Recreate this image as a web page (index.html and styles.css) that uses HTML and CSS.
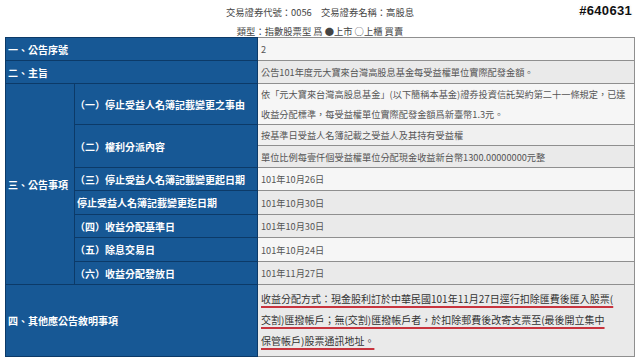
FILE: index.html
```html
<!DOCTYPE html>
<html lang="zh-Hant">
<head>
<meta charset="utf-8">
<link rel="stylesheet" href="styles.css">
</head>
<body>
<div class="tag">#640631</div>
<div class="head">
  <div class="l1">交易證券代號：0056　交易證券名稱：高股息</div>
  <div class="l2">類型：指數股票型 爲 ●上市 ○上櫃 買賣</div>
</div>
<table class="info">
  <colgroup><col class="c1"><col class="c2"><col class="c3"></colgroup>
  <tr class="h23">
    <th colspan="2" class="lab">一、公告序號</th>
    <td class="val light">2</td>
  </tr>
  <tr class="h23">
    <th colspan="2" class="lab">二、主旨</th>
    <td class="val gray">公告101年度元大寶來台灣高股息基金每受益權單位實際配發金額。</td>
  </tr>
  <tr class="h41">
    <th rowspan="8" class="lab">三、公告事項</th>
    <th class="lab sub">（一）停止受益人名簿記載變更之事由</th>
    <td class="val light two">依「元大寶來台灣高股息基金」(以下簡稱本基金)證券投資信託契約第二十一條規定，已達<br>收益分配標準，每受益權單位實際配發金額爲新臺幣1.3元。</td>
  </tr>
  <tr class="h21">
    <th rowspan="2" class="lab sub">（二）權利分派內容</th>
    <td class="val mid">按基準日受益人名簿記載之受益人及其持有受益權</td>
  </tr>
  <tr class="h22">
    <td class="val gray">單位比例每壹仟個受益權單位分配現金收益新台幣1300.00000000元整</td>
  </tr>
  <tr class="h23">
    <th class="lab sub">（三）停止受益人名簿記載變更起日期</th>
    <td class="val light">101年10月26日</td>
  </tr>
  <tr class="h24">
    <th class="lab sub tight">停止受益人名簿記載變更迄日期</th>
    <td class="val gray">101年10月30日</td>
  </tr>
  <tr class="h23">
    <th class="lab sub">（四）收益分配基準日</th>
    <td class="val gray">101年10月30日</td>
  </tr>
  <tr class="h24">
    <th class="lab sub">（五）除息交易日</th>
    <td class="val light">101年10月24日</td>
  </tr>
  <tr class="h23">
    <th class="lab sub">（六）收益分配發放日</th>
    <td class="val gray">101年11月27日</td>
  </tr>
  <tr class="h72">
    <th colspan="2" class="lab">四、其他應公告敘明事項</th>
    <td class="val gray note">
      <span class="ul">收益分配方式：現金股利訂於中華民國101年11月27日逕行扣除匯費後匯入股票(</span><br>
      <span class="ul">交割)匯撥帳戶；無(交割)匯撥帳戶者，於扣除郵費後改寄支票至(最後開立集中</span><br>
      <span class="ul">保管帳戶)股票通訊地址。</span>
    </td>
  </tr>
</table>
</body>
</html>
```

FILE: styles.css
```css
html, body {
  margin: 0;
  padding: 0;
  background: #ffffff;
}
body {
  width: 640px;
  height: 361px;
  overflow: hidden;
  position: relative;
  font-family: "Noto Sans CJK TC", "Noto Sans", sans-serif;
}
.tag {
  position: absolute;
  top: 3px;
  right: 8px;
  font-family: "Liberation Sans", Arial, sans-serif;
  font-weight: bold;
  font-size: 13px;
  letter-spacing: 0.3px;
  color: #111;
  text-shadow: 1px 0 0 #fff, -1px 0 0 #fff, 0 1px 0 #fff, 0 -1px 0 #fff,
    1px 1px 0 #fff, -1px -1px 0 #fff, 1px -1px 0 #fff, -1px 1px 0 #fff,
    0 0 2px #888;
}
.head {
  height: 37px;
  box-sizing: border-box;
  padding-top: 4px;
  text-align: center;
  color: #444;
  font-size: 9.3px;
}
.head .l1 {
  line-height: 16px;
}
.head .l2 {
  margin-top: 5px;
  line-height: 12px;
}
.info {
  margin-left: 5px;
  width: 629px;
  table-layout: fixed;
  border-collapse: collapse;
  border-bottom: 1px solid #666;
  border-right: 1px solid #777;
}
.c1 { width: 69px; }
.c2 { width: 183px; }
.c3 { width: 377px; }
.info th, .info td {
  padding: 0;
  box-sizing: border-box;
}
.lab {
  background: #175895;
  color: #fff;
  border: 1px solid #0c3a68;
  text-align: left;
  font-size: 10px;
  font-weight: bold;
  padding-left: 2px !important;
  vertical-align: middle;
  white-space: nowrap;
}
.sub {
  padding-left: 0 !important;
}
.tight {
  padding-left: 2px !important;
}
.val {
  border: 1px solid #8f8f8f;
  color: #555;
  font-size: 9.2px;
  padding-left: 3px !important;
  vertical-align: middle;
  white-space: nowrap;
  line-height: 14px;
}
.light { background: #f6f6f6; }
.mid { background: #f0f0f0; }
.gray { background: #eaeaea; }
.two { line-height: 20px; }
.h23 { height: 23px; }
.h24 { height: 24px; }
.h21 { height: 21px; }
.h22 { height: 22px; }
.h41 { height: 41px; }
.h72 { height: 72px; }
.note {
  vertical-align: top;
  padding-top: 3px !important;
  line-height: 21px;
  font-size: 10px;
  color: #333;
}
.ul {
  text-decoration: underline;
  text-decoration-color: #c8343e;
  text-decoration-thickness: 1.5px;
  text-underline-offset: 3px;
}
```
